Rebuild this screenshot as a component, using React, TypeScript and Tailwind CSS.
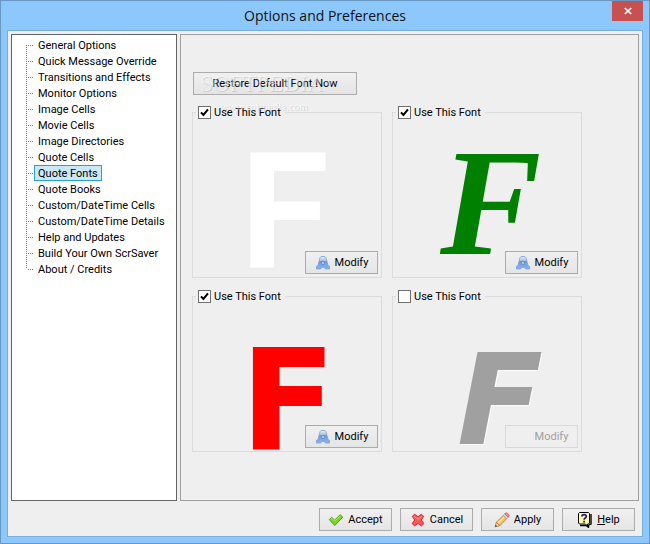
import { useState, type ReactNode } from "react";

const sections = [
  "General Options",
  "Quick Message Override",
  "Transitions and Effects",
  "Monitor Options",
  "Image Cells",
  "Movie Cells",
  "Image Directories",
  "Quote Cells",
  "Quote Fonts",
  "Quote Books",
  "Custom/DateTime Cells",
  "Custom/DateTime Details",
  "Help and Updates",
  "Build Your Own ScrSaver",
  "About / Credits",
];

function FontIcon() {
  return (
    <svg width="16" height="16" viewBox="0 0 16 16" aria-hidden="true">
      <defs>
        <linearGradient id="fontBlue" x1="0" y1="0" x2="0" y2="1">
          <stop offset="0" stopColor="#e6ecf5" />
          <stop offset="0.3" stopColor="#b4c8e6" />
          <stop offset="0.4" stopColor="#6f9ade" />
          <stop offset="1" stopColor="#86b2f4" />
        </linearGradient>
      </defs>
      <path
        d="M6 1.5h4l1 1.2 2 7.8 1.5.8v2.7h-4.2l-.6-1.6H6.3L5.7 14H1.5v-2.7l1.5-.8 2-7.8z"
        fill="url(#fontBlue)"
        stroke="#7f9fd2"
        strokeWidth="0.8"
      />
      <path d="M7 6.5h2v3H7z" fill="#eef2f9" stroke="#5f87c8" strokeWidth="0.8" />
    </svg>
  );
}

function AcceptIcon() {
  return (
    <svg width="16" height="16" viewBox="0 0 16 16" aria-hidden="true">
      <path
        d="M1.3 7.6 3.6 5.3l3 2.8 5.6-5.4 2.6 2.5-8.1 8.3z"
        fill="#7bd321"
        stroke="#4ba60f"
        strokeWidth="1"
        strokeLinejoin="round"
      />
      <path d="M2.8 7.2l1-.9 2.8 2.8 5.6-5.2" fill="none" stroke="#b4ee6c" strokeWidth="0.9" />
    </svg>
  );
}

function CancelIcon() {
  return (
    <svg width="16" height="16" viewBox="0 0 16 16" aria-hidden="true">
      <path
        d="M2.3 4.3 4.7 2.3 8 4.7l3.3-2.4 2.4 2L11.3 8l2.6 3.6-2.5 2.3L8 11.3l-3.4 2.6-2.5-2.3L4.7 8z"
        fill="#fb5a5a"
        stroke="#d8282d"
        strokeWidth="1"
        strokeLinejoin="round"
      />
      <path d="M4 4.4 8 7.2l4-2.8" fill="none" stroke="#ff9c9c" strokeWidth="1" />
    </svg>
  );
}

function PencilIcon() {
  return (
    <svg width="16" height="16" viewBox="0 0 16 16" aria-hidden="true">
      <path d="M1.2 14.8 2.4 10.2 5.8 13.6z" fill="#f7e2c4" stroke="#a06a2c" strokeWidth="0.8" />
      <path d="M1.2 14.8 1.8 12.9 3.1 14.2z" fill="#3a2a1a" />
      <path d="M2.4 10.2 9.2 3.4l3.4 3.4-6.8 6.8z" fill="#fbc35a" stroke="#b5762a" strokeWidth="0.8" />
      <path d="M4 11 10.4 4.8" stroke="#ffe6a8" strokeWidth="1.3" />
      <path d="M9.2 3.4 10.8 1.8l3.4 3.4-1.6 1.6z" fill="#d9dde2" stroke="#8f949a" strokeWidth="0.7" />
      <path d="M10.8 1.8 11.6 1q.8-.6 1.6.2l1.6 1.6q.8.8.1 1.6l-.7.8z" fill="#f48a8a" stroke="#cf4f4f" strokeWidth="0.7" />
    </svg>
  );
}

function HelpIcon() {
  return (
    <svg width="16" height="17" viewBox="0 0 16 17" aria-hidden="true">
      <path d="M3 14.5h6l2.5 1.8v-2.2l2.5-1V3" fill="none" stroke="#000" strokeWidth="1.4" />
      <path
        d="M2.5 1.5h9l1 1v9.5l-1 1h-1v2L8.5 13h-6l-1-1V2.5z"
        fill="#fffca0"
        stroke="#000"
        strokeWidth="1"
      />
      <path
        d="M4.9 5.6q0-1.9 2.2-1.9t2.2 1.7q0 1-1.1 1.6Q7.1 7.7 7.1 8.8"
        fill="none"
        stroke="#1a1a8c"
        strokeWidth="1.7"
      />
      <path d="M6.2 9.8H8v1.6H6.2z" fill="#1a1a8c" />
    </svg>
  );
}

function PushButton({
  icon,
  children,
  disabled = false,
}: {
  icon: ReactNode;
  children: ReactNode;
  disabled?: boolean;
}) {
  return (
    <button
      type="button"
      disabled={disabled}
      className="flex h-[23px] w-[73px] items-center justify-center gap-1 border border-[#acacac] bg-linear-to-b from-[#f0f0f0] to-[#e5e5e5] disabled:border-[#d9d9d9] disabled:bg-none disabled:text-[#a0a0a0]"
    >
      {icon}
      <span>{children}</span>
    </button>
  );
}

function FontGroup({
  id,
  initial,
  children,
}: {
  id: string;
  initial: boolean;
  children: ReactNode;
}) {
  const [on, setOn] = useState(initial);
  return (
    <fieldset className="min-w-0 border border-[#dcdcdc]">
      <legend className="ml-[3px] flex h-[13px] items-center gap-[3px] px-[2px]">
        <span className="grid size-[13px] place-items-center">
          <input
            id={id}
            type="checkbox"
            checked={on}
            onChange={() => setOn(!on)}
            className="peer col-start-1 row-start-1 size-[13px] appearance-none border border-[#707070] bg-white"
          />
          <svg
            className="pointer-events-none invisible col-start-1 row-start-1 peer-checked:visible"
            width="9"
            height="9"
            viewBox="0 0 9 9"
            aria-hidden="true"
          >
            <path d="M1 4.4 3.4 7 8 1.3" fill="none" stroke="#000" strokeWidth="2" />
          </svg>
        </span>
        <label htmlFor={id} className="pr-[2px]">
          Use This Font
        </label>
      </legend>
      <div className="grid h-full">
        {children}
        <div className="col-start-1 row-start-1 self-end justify-self-end p-[3px]">
          <PushButton
            disabled={!initial}
            icon={initial ? <FontIcon /> : <span className="size-4" />}
          >
            Modify
          </PushButton>
        </div>
      </div>
    </fieldset>
  );
}

export default function App() {
  const [selected, setSelected] = useState("Quote Fonts");
  return (
    <div className="flex min-h-screen flex-col border border-[#6a98c4] bg-[#8cc8fb] px-[6px] pb-[6px] font-[Roboto,'Liberation_Sans',sans-serif] text-[11px] leading-[13px] text-black">
      <header className="grid h-[29px] grid-cols-[31px_1fr_31px] items-start">
        <h1 className="col-start-2 self-center text-center font-['Open_Sans','Noto_Sans',sans-serif] text-[14px] leading-5 text-[#111]">
          Options and Preferences
        </h1>
        <button
          type="button"
          aria-label="Close"
          className="flex h-5 w-[31px] items-center justify-center bg-[#c75050]"
        >
          <svg width="8" height="8" viewBox="0 0 8 8" aria-hidden="true">
            <path d="M.8 1 7.2 7M7.2 1 .8 7" stroke="#fff" strokeWidth="1.7" />
          </svg>
        </button>
      </header>

      <main className="flex grow flex-col border border-[#78acdc] bg-[#efefef] px-[3px] pt-[3px]">
        <div className="flex grow gap-[3px]">
          <nav className="w-[166px] shrink-0 border border-[#646464] bg-white pt-[2px] pl-[14px]">
            <ul>
              {sections.map((name, i) => (
                <li key={name} className="flex h-4">
                  <span
                    aria-hidden="true"
                    className={`w-px shrink-0 bg-[repeating-linear-gradient(to_bottom,#808080_0_1px,transparent_1px_2px)] ${
                      i === 0
                        ? "h-2 self-end"
                        : i === sections.length - 1
                          ? "h-2 self-start"
                          : "h-4"
                    }`}
                  />
                  <span
                    aria-hidden="true"
                    className="mt-2 h-px w-[7px] shrink-0 bg-[repeating-linear-gradient(to_right,transparent_0_1px,#808080_1px_2px)]"
                  />
                  <button
                    type="button"
                    onClick={() => setSelected(name)}
                    className={`flex h-4 items-center border px-[3px] whitespace-nowrap ${
                      name === selected
                        ? "border-[#26a0da] bg-[#cbe8f6]"
                        : "border-transparent"
                    }`}
                  >
                    {name}
                  </button>
                </li>
              ))}
            </ul>
          </nav>

          <section className="relative grow border border-[#a0a0a0] pt-[37px] pl-[11px]">
            <button
              type="button"
              className="ml-px h-[23px] w-[164px] border border-[#acacac] bg-linear-to-b from-[#f0f0f0] to-[#e5e5e5]"
            >
              Restore Default Font Now
            </button>
            <div
              aria-hidden="true"
              className="pointer-events-none absolute top-[36px] left-[19px] font-['Liberation_Serif',serif] text-white/50 [text-shadow:1px_1px_0_rgb(0_0_0/0.12)]"
            >
              <p className="text-[23px] leading-[26px]">
                SOFTPEDIA<sup className="text-[8px]">™</sup>
              </p>
              <p className="pl-5 text-[11px] leading-[18px]">www.softpedia.com</p>
            </div>

            <div className="mt-[11px] grid grid-cols-[190px_190px] grid-rows-[172px_162px] gap-x-[10px] gap-y-3">
              <FontGroup id="font1" initial>
                <span className="col-start-1 row-start-1 pt-[33px] pl-[47px] font-[Roboto,sans-serif] text-[162px] leading-[120px] font-bold text-white">
                  F
                </span>
              </FontGroup>
              <FontGroup id="font2" initial>
                <span className="col-start-1 row-start-1 pt-[24px] pl-[47px] font-['Liberation_Serif',serif] text-[152px] leading-[120px] font-bold text-[#008000] italic">
                  F
                </span>
              </FontGroup>
              <FontGroup id="font3" initial>
                <span className="col-start-1 row-start-1 pt-[48px] pl-[47px] font-['DejaVu_Sans',sans-serif] text-[141px] leading-[100px] font-bold text-[#ff0000]">
                  F
                </span>
              </FontGroup>
              <FontGroup id="font4" initial={false}>
                <span className="col-start-1 row-start-1 pt-[48px] pl-[64px] font-['DejaVu_Sans',sans-serif] text-[126px] leading-[100px] font-bold text-[#a0a0a0] italic [text-shadow:1px_1px_0_white]">
                  F
                </span>
              </FontGroup>
            </div>
          </section>
        </div>

        <footer className="flex justify-end gap-2 px-1 pt-[7px] pb-[5px]">
          <PushButton icon={<AcceptIcon />}>Accept</PushButton>
          <PushButton icon={<CancelIcon />}>Cancel</PushButton>
          <PushButton icon={<PencilIcon />}>Apply</PushButton>
          <PushButton icon={<HelpIcon />}>
            <u>H</u>elp
          </PushButton>
        </footer>
      </main>
    </div>
  );
}
